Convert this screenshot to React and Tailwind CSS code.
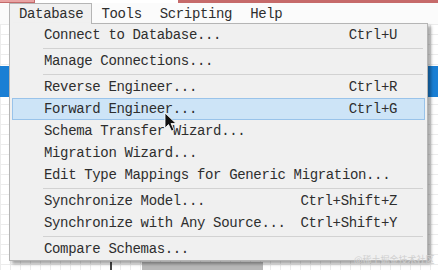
import React from 'react';

const font = { fontFamily: '"Liberation Mono", "DejaVu Sans Mono", monospace' };

// menu rows: null marks a separator
const items = [
  ['Connect to Database...', 'Ctrl+U'],
  null,
  ['Manage Connections...', ''],
  null,
  ['Reverse Engineer...', 'Ctrl+R'],
  ['Forward Engineer...', 'Ctrl+G', true],
  ['Schema Transfer Wizard...', ''],
  ['Migration Wizard...', ''],
  ['Edit Type Mappings for Generic Migration...', ''],
  null,
  ['Synchronize Model...', 'Ctrl+Shift+Z'],
  ['Synchronize with Any Source...', 'Ctrl+Shift+Y'],
  null,
  ['Compare Schemas...', ''],
];

function Cursor() {
  return (
    <svg width="14" height="20" viewBox="0 0 14 20" className="absolute left-[164px] top-[112px]">
      <path d="M1 1 L1 16 L4.5 12.5 L7.5 19 L10 18 L7 11.5 L12 11.5 Z" fill="#111" stroke="#fff" strokeWidth="0.8" />
    </svg>
  );
}

export default function App() {
  return (
    <div className="relative w-[438px] h-[270px] overflow-hidden bg-white text-[#2e2e2e]" style={font}>
      {/* window strip behind */}
      <div className="flex h-[3px]">
        <div className="w-[35px] bg-[#e9a3a3] border-b border-r border-[#c46a6a]" />
        <div className="w-[143px]" />
        <div className="flex-1 bg-[#c66a6a]" />
      </div>

      {/* menubar */}
      <div className="flex h-[21px] items-stretch pl-[9px] bg-[#fbfbfb] text-[14px] tracking-[-0.35px] leading-none">
        <div className="flex items-center pl-[9px] pr-[8px] border border-b-0 border-[#b5b5b5] bg-[#f0f0f0]">Database</div>
        <div className="flex items-center px-[8px] border border-transparent">Tools</div>
        <div className="flex items-center px-[8px] border border-transparent">Scripting</div>
        <div className="flex items-center px-[8px] border border-transparent">Help</div>
      </div>

      {/* canvas behind the menu */}
      <div className="h-[246px] bg-white bg-[linear-gradient(#ececec_1px,transparent_1px),linear-gradient(90deg,#ececec_1px,transparent_1px)] bg-[length:10px_10px] flex flex-col">
        <div className="h-[42px]" />
        <div className="h-[31px] bg-[#1a7fd4]" />
        <div className="flex-1" />
        <div className="flex h-[8px] items-end">
          <div className="ml-[110px] w-[2px] h-[8px] bg-[#444]" />
          <div className="ml-[30px] w-[121px] h-[8px] bg-[#b8b8b8]" />
        </div>
      </div>

      {/* dropdown */}
      <div className="absolute left-[9px] top-[23px] w-[419px] bg-[#f0f0f0] border border-[#b5b5b5] shadow-[3px_3px_3px_rgba(0,0,0,0.35)] px-[2px] text-[14px] tracking-[-0.35px] leading-none">
        <div className="absolute left-[-1px] top-[-1px] w-[82px] h-[2px] bg-[#f0f0f0] border-l border-[#b5b5b5]" />
        {items.map((it, i) =>
          it === null ? (
            <div key={i} className="h-[4px] flex items-center pl-[31px] pr-[2px]">
              <div className="h-[1px] w-full bg-[#d2d2d2]" />
            </div>
          ) : (
            <div
              key={i}
              className={
                'h-[22px] flex items-center justify-between pl-[31px] pr-[27px] border ' +
                (it[2] ? 'bg-[#cde4f7] border-[#99c3ea]' : 'border-transparent')
              }
            >
              <span>{it[0]}</span>
              <span>{it[1]}</span>
            </div>
          )
        )}
      </div>

      <Cursor />

      <div
        className="absolute left-[354px] top-[255px] text-[9px] text-[#cfcfcf] leading-none whitespace-nowrap"
        style={{ fontFamily: '"Noto Sans CJK SC", sans-serif' }}
      >
        @稀土掘金技术社区
      </div>
    </div>
  );
}
